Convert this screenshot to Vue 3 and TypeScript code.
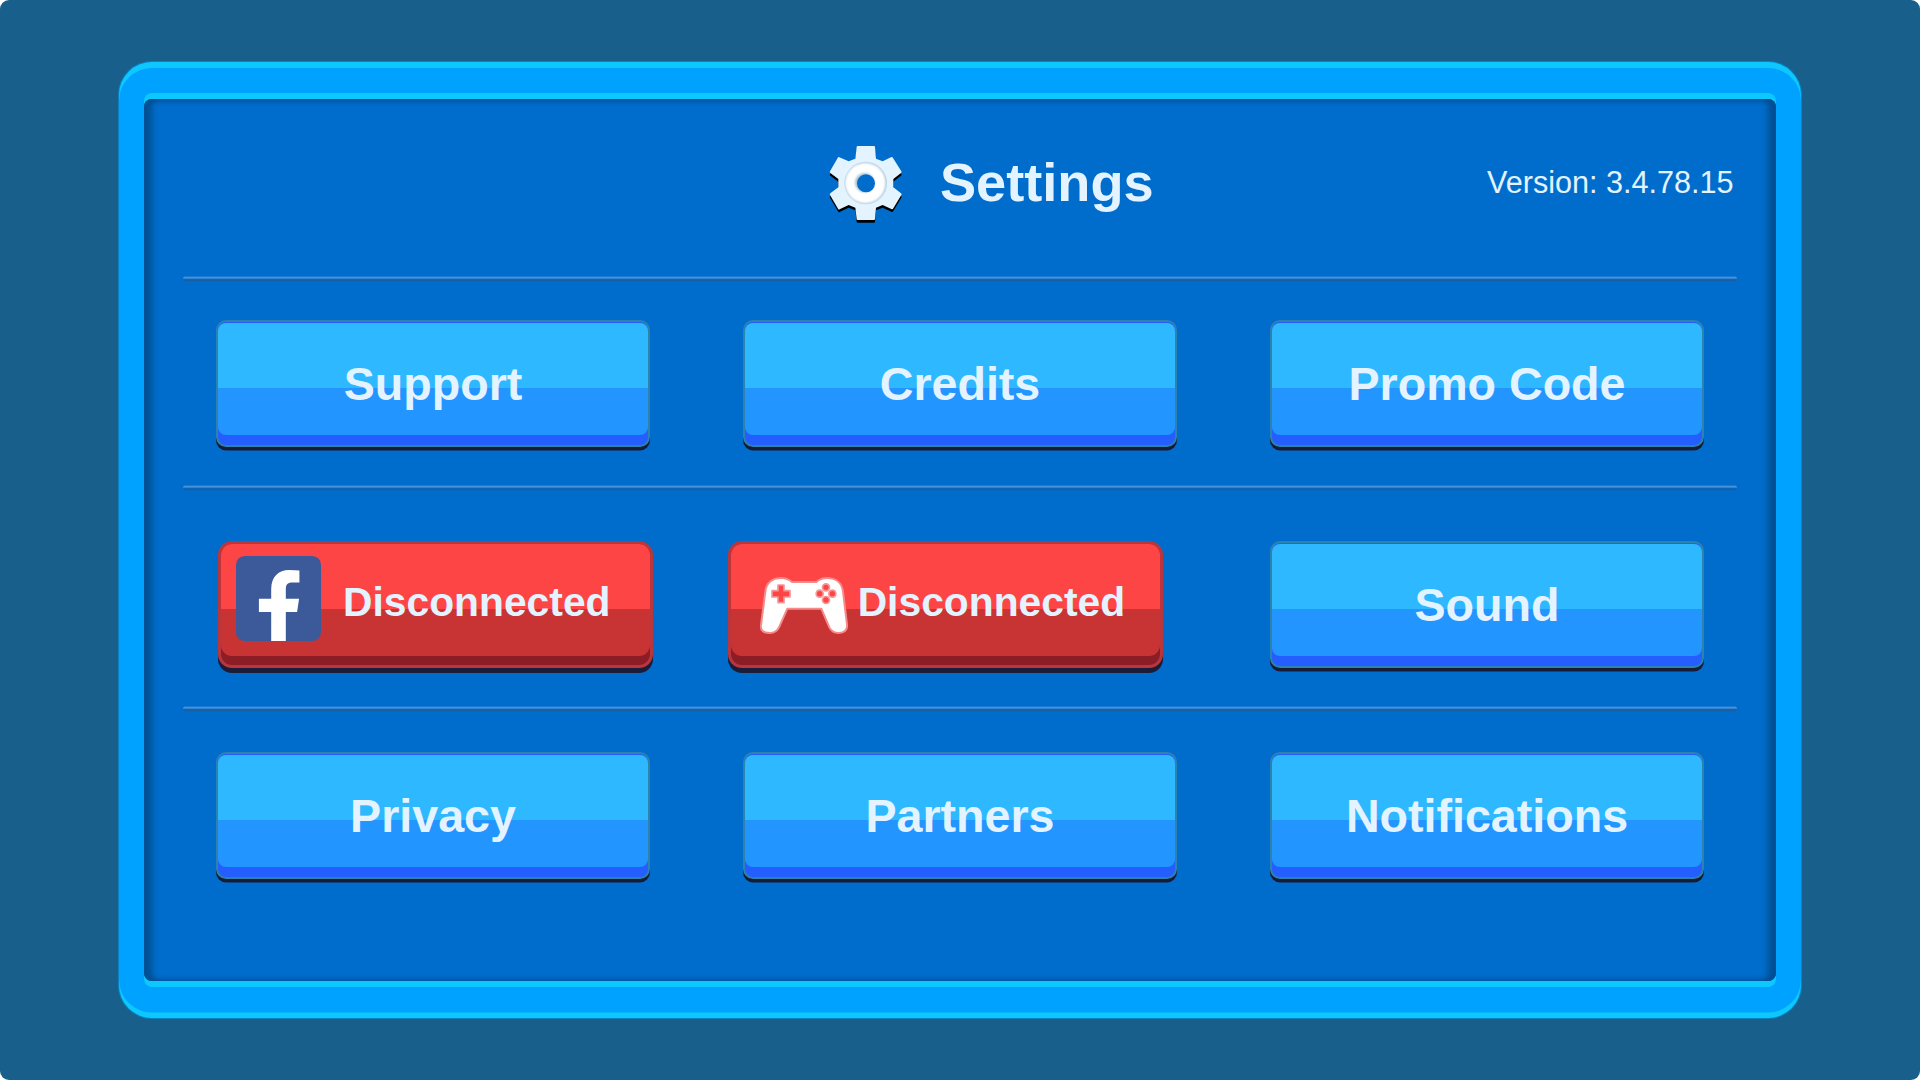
<script setup lang="ts">
interface Action {
  label: string
  kind: 'blue' | 'facebook' | 'gamepad'
}

const rows: Action[][] = [
  [
    { label: 'Support', kind: 'blue' },
    { label: 'Credits', kind: 'blue' },
    { label: 'Promo Code', kind: 'blue' },
  ],
  [
    { label: 'Disconnected', kind: 'facebook' },
    { label: 'Disconnected', kind: 'gamepad' },
    { label: 'Sound', kind: 'blue' },
  ],
  [
    { label: 'Privacy', kind: 'blue' },
    { label: 'Partners', kind: 'blue' },
    { label: 'Notifications', kind: 'blue' },
  ],
]
const gear =
  'M173 48H222Q225 48 225 51L228 86L248 94L273 82Q277 80 279 84L304 124Q306 127 303 129L280 147V172L303 190Q306 192 304 195L280 235Q278 239 274 237L248 225L228 233L225 267Q225 270 222 270H173Q170 270 170 267L166 233L146 225L119 238Q116 240 114 236L90 195Q88 192 91 190L115 172V147L91 129Q88 127 90 124L113 84Q115 80 118 82L146 94L166 86L170 51Q170 48 173 48Z'
</script>

<template>
  <main class="screen">
    <section class="frame">
      <div class="panel">
        <header class="header">
          <svg class="gear" viewBox="78 42 240 246">
            <defs>
              <filter id="soft" x="-20%" y="-20%" width="140%" height="140%">
                <feGaussianBlur stdDeviation="2.5" />
              </filter>
            </defs>
            <path :d="gear" fill="#000" transform="translate(0 8)" />
            <path :d="gear" fill="#e3f3ff" />
            <circle cx="197" cy="159" r="64" fill="#b3cde0" />
            <circle cx="196" cy="159" r="60" fill="#fff" filter="url(#soft)" />
            <circle cx="194" cy="158" r="29" fill="#a5bfd2" filter="url(#soft)" />
            <circle cx="198" cy="160" r="27" fill="#006dcc" />
          </svg>
          <h1 class="title">Settings</h1>
          <p class="version">Version: 3.4.78.15</p>
        </header>
        <template v-for="(row, i) in rows" :key="i">
          <hr class="divider" />
          <div class="row" :class="`row-${i}`">
            <button
              v-for="(a, j) in row"
              :key="j"
              class="btn"
              :class="[a.kind, { red: a.kind !== 'blue' }]"
            >
              <span class="face">
                <svg v-if="a.kind === 'facebook'" class="fb" viewBox="0 0 256 256">
                  <rect width="256" height="256" rx="26" fill="#3c5a99" />
                  <path
                    d="M106 256V169H69V129H106V100C106 62 128 42 160 42Q180 42 191 44V80H170C154 80 150 88 150 101V129H190L184 169H150V256Z"
                    fill="#fff"
                  />
                </svg>
                <svg v-if="a.kind === 'gamepad'" class="pad" viewBox="147 168 270 177">
                  <path
                    d="M166 215C168 188 188 174 213 174Q232 174 246 186H319Q332 174 351 174C377 174 396 188 399 215L411 314C413 330 403 339 386 339C371 339 364 334 358 322L334 266H232L208 320C202 334 194 339 179 339C160 339 151 331 153 315Z"
                    fill="#fff"
                    stroke="#f78b8b"
                    stroke-width="6"
                    stroke-linejoin="round"
                  />
                  <g fill="#fe4545" stroke="#f99595" stroke-width="5" stroke-linejoin="round">
                    <path d="M204 195H222V212H240V231H222V248H204V231H186V212H204Z" />
                    <circle cx="348" cy="202" r="10.5" />
                    <circle cx="329" cy="221" r="10.5" />
                    <circle cx="367" cy="221" r="10.5" />
                    <circle cx="348" cy="240" r="10.5" />
                  </g>
                </svg>
                <span class="label">{{ a.label }}</span>
              </span>
            </button>
          </div>
        </template>
      </div>
    </section>
  </main>
</template>

<style>
body {
  background: #fff;
}
</style>

<style scoped>
* {
  box-sizing: border-box;
}
.screen {
  width: 1920px;
  height: 1080px;
  padding: 61px 118px;
  border-radius: 9px;
  background: #18608b;
  font-family: 'Liberation Sans', Arial, sans-serif;
  overflow: hidden;
}
.frame {
  height: 958px;
  padding: 37px 25px;
  border: 1px solid rgba(0, 170, 255, 0.45);
  border-radius: 34px;
  background: #00a2ff;
  background-clip: padding-box;
  box-shadow:
    inset 0 6px #0cc8ff,
    inset 0 -5.5px #0cc8ff;
}
.panel {
  height: 882px;
  padding: 0 39px;
  border-radius: 8px;
  background: #006dcc;
  box-shadow:
    0 -6px #0cc8ff,
    0 6px #0cc8ff,
    inset 9px 0 6px -1px #005093,
    inset -9px 0 6px -1px #005093,
    inset 0 1px 5px #005093;
}
.header {
  display: flex;
  align-items: flex-start;
  height: 177px;
  padding-left: 643.3px;
}
.gear {
  width: 80px;
  height: 82px;
  margin-top: 45px;
  flex: none;
}
.title {
  margin: 52px 0 0 33.6px;
  font-size: 54.2px;
  line-height: 62px;
  color: #e3f3ff;
  white-space: nowrap;
}
.version {
  margin: 65px 3.4px 0 auto;
  font-size: 30.6px;
  line-height: 36px;
  color: #e3f3ff;
  white-space: nowrap;
}
.divider {
  height: 6px;
  margin: 0;
  border: 0;
  border-radius: 3px;
  background: linear-gradient(
    #1c79d1 0 1px,
    #4a93dc 1px 2px,
    #2f83d5 2px 3px,
    #0a66bd 3px 4px,
    #175f9f 4px 5px,
    #0968bb 5px 6px
  );
}
.row {
  display: flex;
  justify-content: space-between;
  padding: 38px 33px 0;
}
.row-0 {
  height: 203px;
}
.row-1 {
  height: 215px;
  padding-top: 50px;
}
.row-2 {
  padding-top: 40px;
}
.btn {
  display: flex;
  flex-direction: column;
  justify-content: flex-start;
  align-items: stretch;
  width: 434px;
  height: 127px;
  padding: 1px 0 0;
  border: 2px solid #2b83ae;
  border-radius: 10px;
  background: #255eff;
  box-shadow: 0 3.5px #171c36;
  font-family: inherit;
  flex: none;
}
.face {
  display: flex;
  align-items: center;
  justify-content: center;
  height: 112px;
  border-radius: 8px;
  background: linear-gradient(#2eb8ff 65px, #2295ff 65px);
}
.label {
  font-size: 46.6px;
  font-weight: bold;
  line-height: 54px;
  color: #e3f3ff;
  white-space: nowrap;
  padding-top: 10px;
}
.red {
  width: 435px;
  height: 127px;
  padding: 0;
  border: 3px solid #b9363c;
  border-radius: 14px;
  background: #8c1d27;
  box-shadow: 0 5px #1c1c38;
}
.red .face {
  justify-content: flex-start;
  border-radius: 11px;
  background: linear-gradient(#fe4545 65px, #c83434 65px);
}
.red .label {
  font-size: 40.8px;
  padding-top: 4px;
}
.facebook {
  margin-left: 2px;
}
.gamepad {
  margin-right: 31.5px;
}
.fb {
  width: 85px;
  height: 85px;
  margin: 0 21.8px 3px 15.2px;
  flex: none;
}
.pad {
  width: 90px;
  height: 59px;
  margin: 10px 8.4px 0 28px;
  flex: none;
}
</style>
